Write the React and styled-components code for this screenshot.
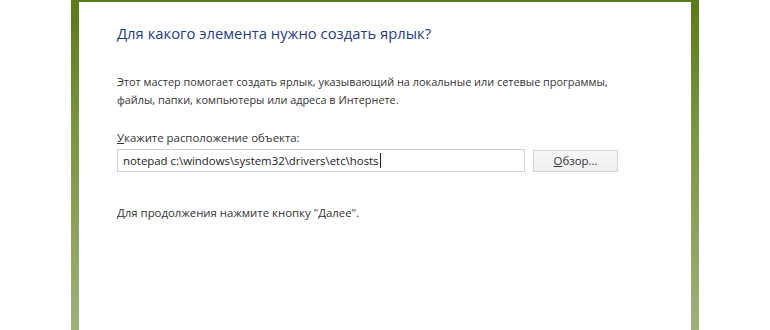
import React from 'react';
import styled, { createGlobalStyle } from 'styled-components';

const GlobalStyle = createGlobalStyle`
  html, body {
    margin: 0;
    padding: 0;
    background: #fff;
  }
  body {
    font-family: "Open Sans", "Noto Sans", sans-serif;
  }
`;

const App = () => {
  return (
    <>
      <GlobalStyle />
      <Page>
        <Frame>
          <Panel>
            <Heading>Для какого элемента нужно создать ярлык?</Heading>
            <Intro>
              Этот мастер помогает создать ярлык, указывающий на локальные или сетевые программы,
              <br />
              файлы, папки, компьютеры или адреса в Интернете.
            </Intro>
            <Label><Key>У</Key>кажите расположение объекта:</Label>
            <Row>
              <PathInput>
                notepad c:\windows\system32\drivers\etc\hosts<Caret />
              </PathInput>
              <BrowseButton><Key>О</Key>бзор...</BrowseButton>
            </Row>
            <Hint>Для продолжения нажмите кнопку "Далее".</Hint>
          </Panel>
        </Frame>
      </Page>
    </>
  );
};

const Page = styled.div`
  width: 770px;
  height: 330px;
  overflow: hidden;
  background: #fff;
`;

const Frame = styled.div`
  margin-left: 71px;
  width: 628px;
  height: 330px;
  box-sizing: border-box;
  padding: 2px 8px 0;
  background: linear-gradient(to bottom, #5a7b18 0%, #7a963f 40%, #a0b07a 100%);
`;

const Panel = styled.div`
  height: 100%;
  background: #fff;
  padding: 22px 0 0 38px;
  box-sizing: border-box;
  color: #333;
`;

const Heading = styled.h1`
  margin: 0;
  font-size: 14.8px;
  font-weight: 400;
  line-height: 18px;
  color: #1f3a8a;
`;

const Intro = styled.p`
  margin: 31px 0 0;
  font-size: 10.9px;
  line-height: 18px;
  color: #333;
`;

const Label = styled.div`
  margin-top: 21px;
  font-size: 11.4px;
  line-height: 16px;
  color: #333;
`;

const Key = styled.span`
  text-decoration: underline;
`;

const Row = styled.div`
  display: flex;
  align-items: center;
  gap: 8px;
  margin-top: 3px;
`;

const PathInput = styled.div`
  width: 408px;
  height: 23px;
  box-sizing: border-box;
  border: 1px solid #c6d3e2;
  padding: 0 5px;
  display: flex;
  align-items: center;
  font-size: 11.4px;
  color: #222;
  background: #fff;
`;

const Caret = styled.span`
  display: inline-block;
  width: 1px;
  height: 15px;
  background: #222;
  margin-left: 1px;
`;

const BrowseButton = styled.div`
  width: 85px;
  height: 22px;
  box-sizing: border-box;
  border: 1px solid #d4d4d4;
  background: linear-gradient(to bottom, #f7f7f7, #eeeeee);
  display: flex;
  align-items: center;
  justify-content: center;
  font-size: 11.4px;
  color: #333;
`;

const Hint = styled.div`
  margin-top: 33px;
  font-size: 11.4px;
  line-height: 16px;
  color: #333;
`;

export default App;
